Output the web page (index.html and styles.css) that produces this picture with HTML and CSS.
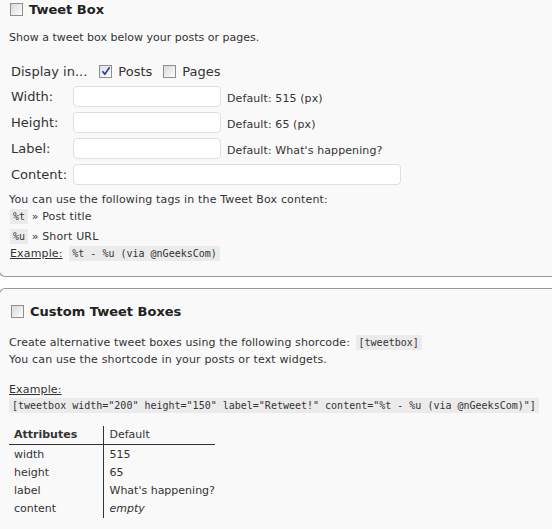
FILE: index.html
```html
<!DOCTYPE html>
<html>
<head>
<meta charset="utf-8">
<link rel="stylesheet" href="styles.css">
</head>
<body>
<div class="panel first">
  <div class="hd"><span class="cb"></span><span class="hd-t">Tweet Box</span></div>
  <p class="desc">Show a tweet box below your posts or pages.</p>
  <div class="display">
    <span class="lbl">Display in...</span>
    <span class="cb checked"><svg width="10" height="10" viewBox="0 0 10 10"><path d="M1.5 5.2 L3.8 8.2 L8.6 1.2" fill="none" stroke="#2a3a8c" stroke-width="1.6"/></svg></span>
    <span class="lbl">Posts</span>
    <span class="cb gap"></span>
    <span class="lbl">Pages</span>
  </div>
  <div class="form">
    <span class="lbl">Width:</span><div class="row"><span class="inp"></span><span class="def">Default: 515 (px)</span></div>
    <span class="lbl">Height:</span><div class="row"><span class="inp"></span><span class="def">Default: 65 (px)</span></div>
    <span class="lbl">Label:</span><div class="row"><span class="inp"></span><span class="def">Default: What's happening?</span></div>
    <span class="lbl">Content:</span><div class="row"><span class="inp wide"></span></div>
  </div>
  <p class="txt t1">You can use the following tags in the Tweet Box content:</p>
  <p class="txt tag tg1"><code>%t</code> » Post title</p>
  <p class="txt tag tg2"><code>%u</code> » Short URL</p>
  <p class="txt tag tg3"><span class="u">Example:</span> <code class="excode">%t - %u (via @nGeeksCom)</code></p>
</div>
<div class="panel second">
  <div class="hd"><span class="cb"></span><span class="hd-t">Custom Tweet Boxes</span></div>
  <p class="txt c1">Create alternative tweet boxes using the following shorcode: <code class="tb">[tweetbox]</code></p>
  <p class="txt c2">You can use the shortcode in your posts or text widgets.</p>
  <p class="txt ex"><span class="u">Example:</span></p>
  <p class="txt cl"><code class="long">[tweetbox width="200" height="150" label="Retweet!" content="%t - %u (via @nGeeksCom)"]</code></p>
  <table class="attrs">
    <tr><th>Attributes</th><td class="hdc">Default</td></tr>
    <tr><td>width</td><td>515</td></tr>
    <tr><td>height</td><td>65</td></tr>
    <tr><td>label</td><td>What's happening?</td></tr>
    <tr class="last"><td>content</td><td><em>empty</em></td></tr>
  </table>
</div>
</body>
</html>
```
FILE: styles.css
```css
html, body { margin: 0; padding: 0; background: #fff; }
body { font-family: "DejaVu Sans", Verdana, sans-serif; color: #333; font-size: 11px; width: 552px; height: 529px; overflow: hidden; }
p { margin: 0; }
.panel { background: #f9f9f9; border: 1px solid #999; border-right: none; margin-left: -1px; border-radius: 6px 0 0 6px; padding-left: 9px; }
.first { border-top: none; border-top-left-radius: 0; height: 277px; box-sizing: border-box; }
.second { margin-top: 11px; height: 260px; border-bottom: none; border-bottom-left-radius: 0; }
.hd { display: flex; align-items: center; height: 18px; padding-left: 1px; }
.second .hd { margin-top: 13px; padding-left: 2px; }
.hd-t { font-weight: bold; font-size: 13px; margin-left: 6px; color: #222; }
.cb { display: inline-flex; align-items: center; justify-content: center; width: 11px; height: 11px; border: 1px solid #8f8f8f; background: linear-gradient(135deg, #d8d8d8, #fff); box-sizing: content-box; }
.cb.checked { background: linear-gradient(135deg, #dde, #fff); }
.desc { margin-top: 13px; line-height: 14px; }
.display { display: flex; align-items: center; margin-top: 18px; padding-left: 2px; height: 16px; }
.display .cb.checked { margin-left: 12px; margin-right: 6px; }
.display .cb.gap { margin-left: 11px; margin-right: 6px; }
.lbl { font-size: 13px; }
.form { display: grid; grid-template-columns: 62px auto; row-gap: 5px; margin-top: 7px; padding-left: 2px; align-items: center; }
.row { display: flex; align-items: center; }
.inp { display: block; width: 146px; height: 19px; background: #fff; border: 1px solid #dfdfdf; border-radius: 4px; }
.inp.wide { width: 326px; }
.def { font-size: 11px; margin-left: 6px; padding-top: 3px; letter-spacing: 0.1px; }
.txt { line-height: 18px; letter-spacing: 0.15px; }
.t1 { margin-top: 6px; }
.tg1 { margin-top: -1px; }
.tg2 { margin-top: 2px; }
.tg3 { margin-top: -1px; }
code { font-family: "DejaVu Sans Mono", "Liberation Mono", monospace; font-size: 10px; background: #ebebeb; padding: 2px 3px; letter-spacing: 0; }
.tag { padding-left: 1px; }
.excode { margin-left: 3px; }
.u { text-decoration: underline; }
.c1 { margin-top: 14px; line-height: 17px; letter-spacing: 0.1px; }
.tb { margin-left: 2px; }
.c2 { line-height: 18px; }
.ex { margin-top: 12px; line-height: 17px; }
.cl { line-height: 15px; }
.long { padding: 2px 3px; }
.attrs { border-collapse: collapse; margin-top: 13px; font-size: 11px; }
.attrs th, .attrs td { text-align: left; height: 18px; padding: 2px 0 0 5px; vertical-align: middle; box-sizing: border-box; }
.attrs th { width: 94px; font-weight: bold; border-right: 1px solid #333; border-bottom: 1px solid #333; height: 17px; padding-top: 0; }
.attrs td.hdc { border-bottom: 1px solid #333; width: 112px; padding-left: 6px; padding-top: 0; }
.attrs tr td:first-child { border-right: 1px solid #333; }
.attrs tr td:nth-child(2) { padding-left: 6px; }
.attrs tr.last td { height: 20px; padding-top: 0; }
```
